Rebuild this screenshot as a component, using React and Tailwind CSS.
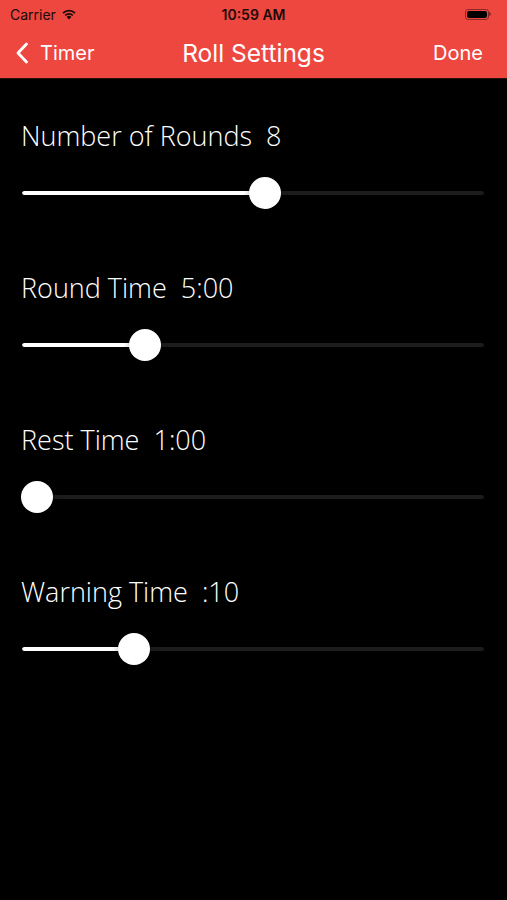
import React from "react";

const rows = [
  { label: "Number of Rounds", value: "8", center: 265 },
  { label: "Round Time", value: "5:00", center: 145 },
  { label: "Rest Time", value: "1:00", center: 37 },
  { label: "Warning Time", value: ":10", center: 134 },
];

function Slider({ center }) {
  const fill = center - 22;
  return (
    <div className="relative ml-[22px] w-[462px] h-[32px] flex items-center">
      <div className="w-full h-[4px] rounded-full bg-[#1c1c1e] overflow-hidden">
        <div className="h-full bg-white rounded-full" style={{ width: fill }} />
      </div>
      <div
        className="absolute top-0 w-[32px] h-[32px] rounded-full bg-white shadow-[0_2px_6px_rgba(0,0,0,0.3)]"
        style={{ left: fill - 16 }}
      />
    </div>
  );
}

export default function App() {
  return (
    <div className="w-[507px] h-[900px] bg-black overflow-hidden" style={{ fontFamily: "Inter, 'Liberation Sans', sans-serif" }}>
      <div className="bg-[#ee4740] border-b border-[#2a0f0d]">
        <div className="h-[28px] flex items-center justify-between px-[10px] relative">
          <div className="flex items-center gap-[5px] text-[14px] text-[#1a0a08]">
            <span>Carrier</span>
            <svg width="16" height="12" viewBox="0 0 16 12">
              <path d="M8 11.5 L5.6 8.9 A3.4 3.4 0 0 1 10.4 8.9 Z" fill="#1a0a08" />
              <path d="M3.6 6.9 A6.2 6.2 0 0 1 12.4 6.9 L11.2 8.1 A4.5 4.5 0 0 0 4.8 8.1 Z" fill="#1a0a08" />
              <path d="M1.4 4.6 A9.3 9.3 0 0 1 14.6 4.6 L13.4 5.8 A7.6 7.6 0 0 0 2.6 5.8 Z" fill="#1a0a08" />
            </svg>
          </div>
          <div className="absolute left-0 right-0 text-center text-[14px] font-semibold text-[#1a0a08] pointer-events-none">10:59 AM</div>
          <div className="flex items-center mr-[6px]">
            <div className="w-[24px] h-[11px] rounded-[3px] border border-[#8a2a24] p-[1px]">
              <div className="w-full h-full rounded-[2px] bg-black" />
            </div>
            <div className="w-[2px] h-[4px] bg-[#8a2a24] rounded-r-sm" />
          </div>
        </div>
        <div className="h-[50px] flex items-center justify-between relative px-[15px]">
          <div className="flex items-center gap-[11px] text-white text-[20px]">
            <svg width="14" height="22" viewBox="0 0 14 22">
              <path d="M11.5 2 L3 11 L11.5 20" stroke="white" strokeWidth="2.8" fill="none" strokeLinecap="round" strokeLinejoin="round" />
            </svg>
            <span>Timer</span>
          </div>
          <div className="absolute left-0 right-0 text-center text-white text-[24.5px] pointer-events-none">Roll Settings</div>
          <span className="text-white text-[20px] mr-[9px]">Done</span>
        </div>
      </div>
      <div className="pt-[41px] flex flex-col gap-[63px]" style={{ fontFamily: "'Open Sans', 'Noto Sans', sans-serif" }}>
        {rows.map((r) => (
          <div key={r.label} className="flex flex-col gap-[25px]">
            <div className="h-[32px] flex items-center pl-[21px] text-white text-[27px] font-light whitespace-pre">
              {r.label + "  " + r.value}
            </div>
            <Slider center={r.center} />
          </div>
        ))}
      </div>
    </div>
  );
}
